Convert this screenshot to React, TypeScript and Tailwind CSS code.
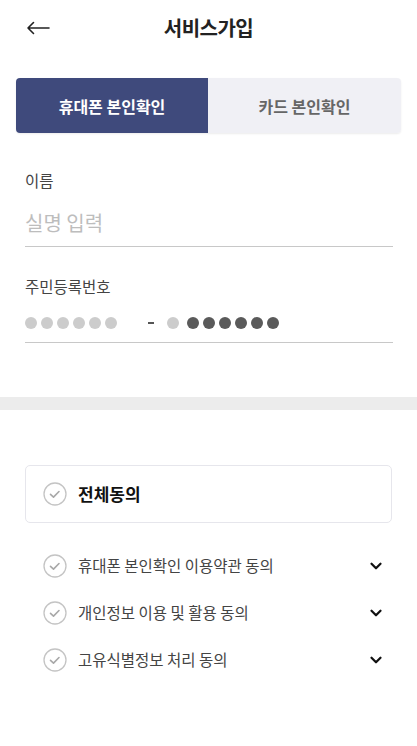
import { ChevronDown } from "lucide-react";

const font = { fontFamily: '"Noto Sans CJK KR", "Noto Sans", sans-serif' };

function CheckCircle() {
  return (
    <svg width="24" height="24" viewBox="0 0 24 24" className="shrink-0">
      <circle cx="12" cy="12" r="11" fill="white" stroke="#c4c4c4" strokeWidth="1.3" />
      <path d="M7.5 12.3l3 2.8 5.5-5.6" fill="none" stroke="#a8a8a8" strokeWidth="1.6" strokeLinecap="round" strokeLinejoin="round" />
    </svg>
  );
}

const terms = [
  "휴대폰 본인확인 이용약관 동의",
  "개인정보 이용 및 활용 동의",
  "고유식별정보 처리 동의",
];

export default function App() {
  return (
    <div className="w-[417px] h-[746px] bg-white text-[#222]" style={font}>
      {/* Header */}
      <div className="relative h-[56px] flex items-center justify-center">
        <button className="absolute left-[26px] top-[17px] w-[26px] h-[22px] flex items-center">
          <svg width="24" height="14" viewBox="0 0 24 14">
            <path d="M2 7h21M7.5 1.5L2 7l5.5 5.5" fill="none" stroke="#222" strokeWidth="1.6" strokeLinecap="round" strokeLinejoin="round" />
          </svg>
        </button>
        <h1 className="text-[20px] font-bold tracking-tight">서비스가입</h1>
      </div>

      {/* Tabs */}
      <div className="mx-[16px] mt-[22px] flex h-[55px] rounded-[4px] overflow-hidden shadow-[0_1px_2px_rgba(0,0,0,0.08)]">
        <div className="w-[192px] bg-[#3f4a7c] text-white flex items-center justify-center text-[16px] font-bold">
          휴대폰 본인확인
        </div>
        <div className="flex-1 bg-[#f0f0f5] text-[#666] flex items-center justify-center text-[16px] font-bold">
          카드 본인확인
        </div>
      </div>

      {/* Name */}
      <div className="px-[25px] mt-[36px]">
        <div className="text-[15.5px] text-[#444] leading-[22px]">이름</div>
        <div className="mt-[18px] pb-[9px] border-b border-[#c8c8c8] text-[20px] text-[#bdbdbd] leading-[28px] w-[368px]">
          실명 입력
        </div>

        <div className="mt-[28px] text-[15.5px] text-[#444] leading-[22px]">주민등록번호</div>
        <div className="mt-[14px] pb-[8px] border-b border-[#c8c8c8] w-[368px] flex items-center h-[23px] box-content">
          <div className="flex gap-[4px]">
            {[0, 1, 2, 3, 4, 5].map((i) => (
              <span key={i} className="w-[12px] h-[12px] rounded-full bg-[#cccccc]" />
            ))}
          </div>
          <span className="ml-[31px] w-[6px] h-[2px] bg-[#555]" />
          <span className="ml-[13px] w-[12px] h-[12px] rounded-full bg-[#cccccc]" />
          <div className="ml-[8px] flex gap-[4px]">
            {[0, 1, 2, 3, 4, 5].map((i) => (
              <span key={i} className="w-[12px] h-[12px] rounded-full bg-[#5a5a5a]" />
            ))}
          </div>
        </div>
      </div>

      {/* Divider band */}
      <div className="mt-[54px] h-[13px] bg-[#ececec]" />

      {/* Agreements */}
      <div className="px-[25px] mt-[55px]">
        <div className="h-[58px] border border-[#e6e6ec] rounded-[5px] flex items-center pl-[17px] gap-[11px]">
          <CheckCircle />
          <span className="text-[17px] font-bold text-[#111]">전체동의</span>
        </div>

        <div className="mt-[31px] flex flex-col gap-[23px] pl-[18px] pr-[7px]">
          {terms.map((t) => (
            <div key={t} className="flex items-center h-[24px]">
              <CheckCircle />
              <span className="ml-[11px] text-[15.5px] text-[#444] flex-1">{t}</span>
              <ChevronDown size={18} strokeWidth={3} color="#111" />
            </div>
          ))}
        </div>
      </div>
    </div>
  );
}
